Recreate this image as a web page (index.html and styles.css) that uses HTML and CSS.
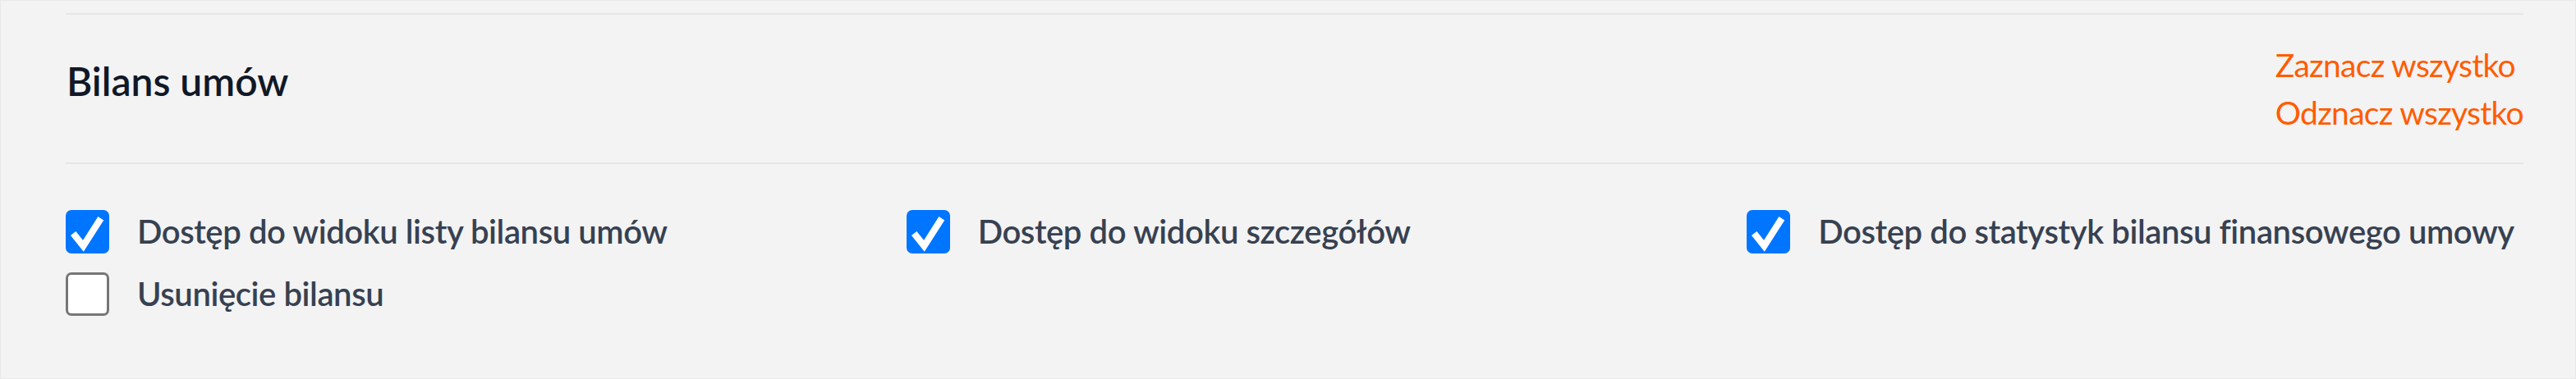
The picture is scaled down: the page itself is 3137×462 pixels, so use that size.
FILE: index.html
```html
<!DOCTYPE html>
<html lang="pl">
<head>
<meta charset="utf-8">
<title>Bilans umów</title>
<link rel="stylesheet" href="styles.css">
</head>
<body>
<section class="card">
  <header class="card-head">
    <h2 class="title">Bilans umów</h2>
    <div class="actions">
      <a class="action" href="#">Zaznacz wszystko</a>
      <a class="action" href="#">Odznacz wszystko</a>
    </div>
  </header>
  <div class="perm-grid">
    <label class="perm">
      <span class="box is-checked"><svg viewBox="0 0 52 52" class="tick"><polyline points="9,28 21,43 42,10"/></svg></span>
      <span class="perm-label">Dostęp do widoku listy bilansu umów</span>
    </label>
    <label class="perm">
      <span class="box is-checked"><svg viewBox="0 0 52 52" class="tick"><polyline points="9,28 21,43 42,10"/></svg></span>
      <span class="perm-label">Dostęp do widoku szczegółów</span>
    </label>
    <label class="perm">
      <span class="box is-checked"><svg viewBox="0 0 52 52" class="tick"><polyline points="9,28 21,43 42,10"/></svg></span>
      <span class="perm-label">Dostęp do statystyk bilansu finansowego umowy</span>
    </label>
    <label class="perm">
      <span class="box"></span>
      <span class="perm-label">Usunięcie bilansu</span>
    </label>
  </div>
</section>
</body>
</html>
```
FILE: styles.css
```css
html, body {
  margin: 0;
  padding: 0;
  background: #f3f3f3;
}
body {
  font-family: "Lato", "Noto Sans", sans-serif;
}
.card {
  box-sizing: border-box;
  width: 3137px;
  height: 462px;
  background: #f3f3f3;
  border: 1px solid #e8e8e8;
  padding: 15px 63px 0 79px;
}
.card-head {
  display: flex;
  align-items: center;
  justify-content: space-between;
  border-top: 2px solid #e6e6ea;
  border-bottom: 2px solid #e6e6ea;
  padding: 32px 0;
}
.title {
  margin: 0 0 18px 0;
  font-size: 48px;
  font-weight: 600;
  color: #111827;
  line-height: 60px;
  padding-left: 1px;
}
.actions {
  display: flex;
  flex-direction: column;
  align-items: flex-start;
}
.action {
  font-size: 39px;
  letter-spacing: -0.7px;
  line-height: 58px;
  color: #ff5c00;
  text-decoration: none;
}
.perm-grid {
  display: grid;
  grid-template-columns: repeat(3, 1fr);
  column-gap: 78px;
  row-gap: 16px;
  padding-top: 52px;
}
.perm {
  display: flex;
  align-items: center;
  height: 60px;
}
.box {
  box-sizing: border-box;
  flex: none;
  width: 53px;
  height: 53px;
  border-radius: 7px;
  background: #ffffff;
  border: 3px solid #767676;
  margin-right: 34px;
}
.box.is-checked {
  background: #0075ff;
  border: none;
}
.tick {
  display: block;
  width: 53px;
  height: 53px;
}
.tick polyline {
  fill: none;
  stroke: #ffffff;
  stroke-width: 8;
}
.perm-label {
  font-size: 40px;
  font-weight: 600;
  letter-spacing: -0.4px;
  color: #374151;
  line-height: 60px;
  white-space: nowrap;
}
```
